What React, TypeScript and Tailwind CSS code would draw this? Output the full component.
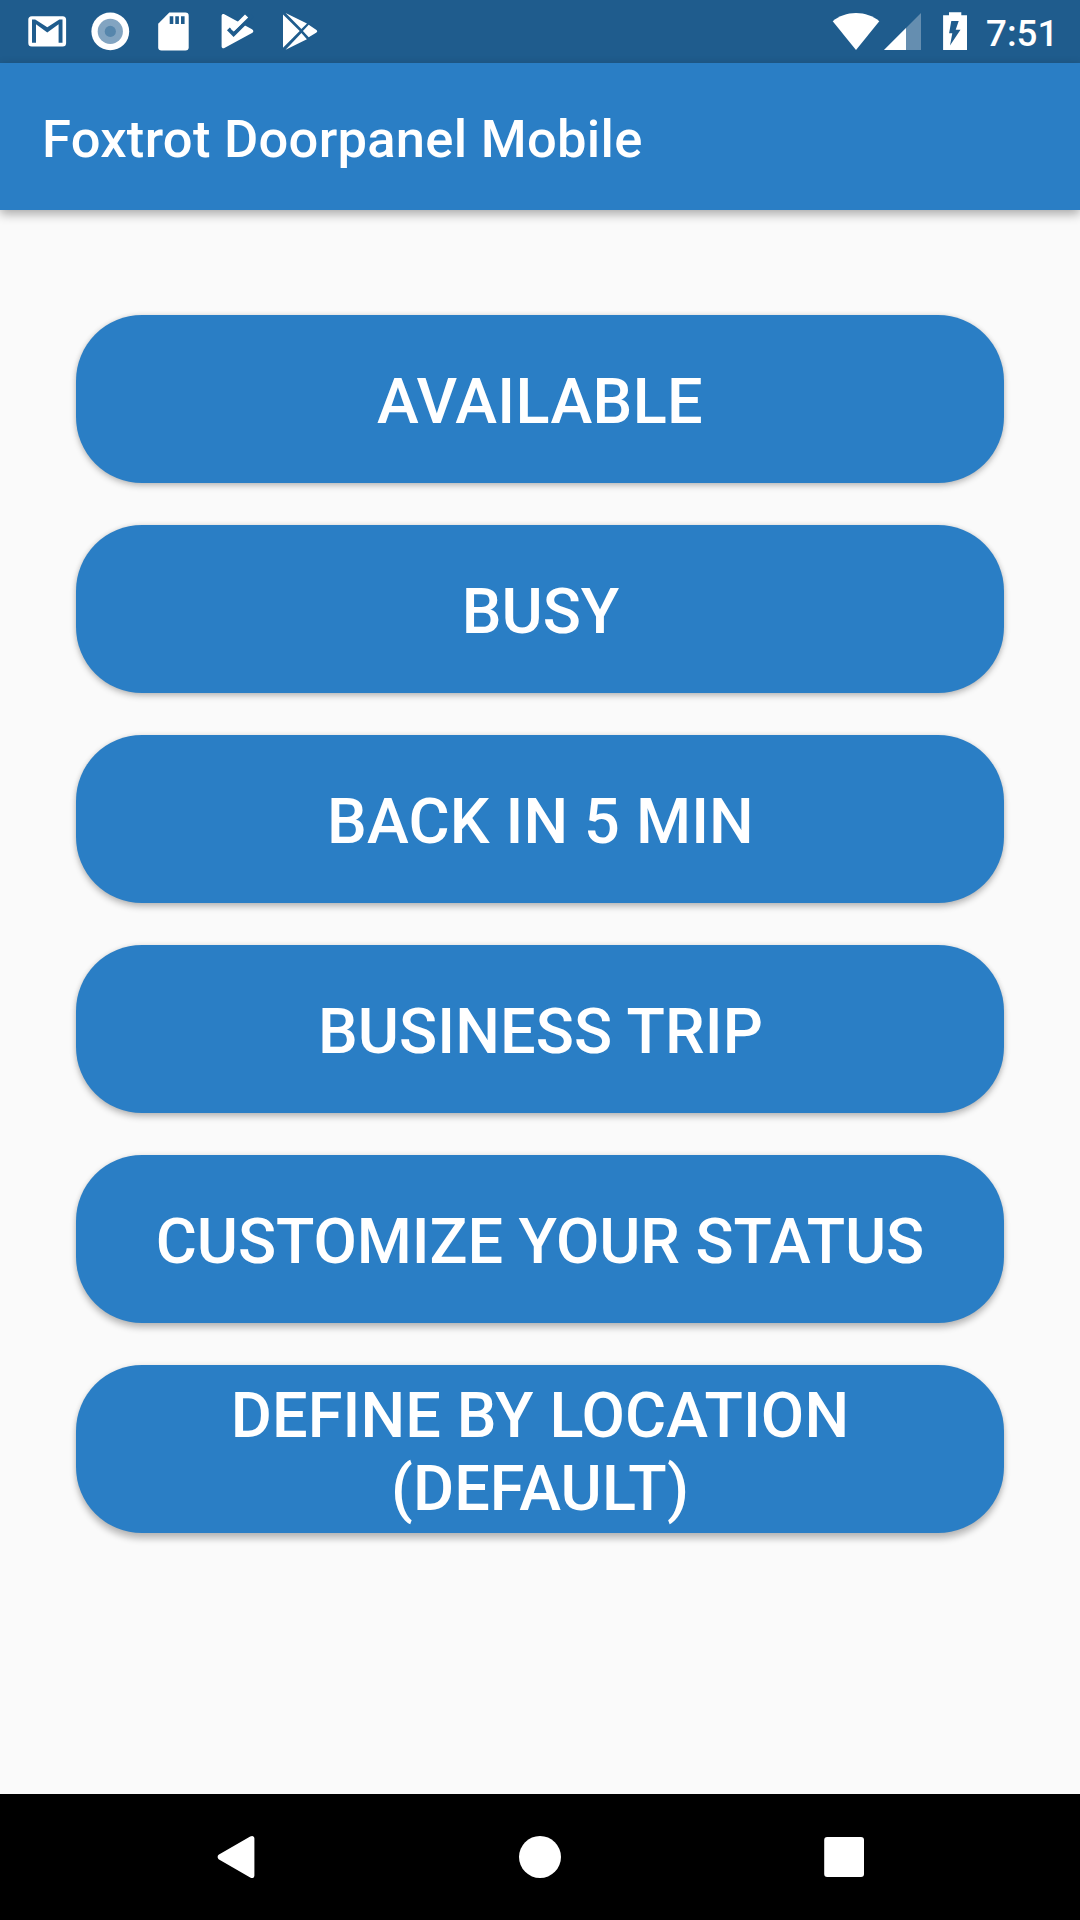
import React from "react";

const statuses = [
  { label: "AVAILABLE", style: "tracking-[0.35px] shadow-[0_3px_6px_rgba(0,0,0,0.22),0_0_5px_rgba(0,0,0,0.1)]" },
  { label: "BUSY", style: "pl-[61px] shadow-[0_3px_6px_rgba(0,0,0,0.23),0_0_5px_rgba(0,0,0,0.1)]" },
  { label: "BACK IN 5 MIN", style: "pl-[61px] tracking-[0.15px] shadow-[0_4px_6px_rgba(0,0,0,0.23),0_0_5px_rgba(0,0,0,0.1)]" },
  { label: "BUSINESS TRIP", style: "pl-[61px] tracking-[0.1px] shadow-[0_4px_6px_rgba(0,0,0,0.23),0_0_5px_rgba(0,0,0,0.1)]" },
  { label: "CUSTOMIZE YOUR STATUS", style: "tracking-[-0.1px] shadow-[0_5px_6px_rgba(0,0,0,0.23),0_0_5px_rgba(0,0,0,0.1)]" },
  { label: "DEFINE BY LOCATION (DEFAULT)", style: "tracking-[0.12px] shadow-[0_6px_6px_rgba(0,0,0,0.23),0_0_5px_rgba(0,0,0,0.1)]" },
];

function GmailIcon() {
  return (
    <svg className="size-[63px]" viewBox="16 0 63 63">
      <rect x="28.3" y="16.2" width="37.8" height="30.4" rx="3.5" fill="#fff" />
      <path d="M32 42.7V19.6h3.2L47.3 27.3l12-7.7h3.2v23.1h-3.9V24.3L47.3 32.4 36 24.3v18.4z" fill="#1f5c8d" />
    </svg>
  );
}

function RecordIcon() {
  return (
    <svg className="size-[63px]" viewBox="79 0 63 63">
      <circle cx="110.3" cy="31.4" r="18.9" fill="#fff" />
      <circle cx="110.3" cy="31.4" r="12.6" fill="#82a4c1" />
      <circle cx="110.3" cy="31.4" r="5.6" fill="#5686ac" />
    </svg>
  );
}

function SdCardIcon() {
  return (
    <svg className="size-[63px]" viewBox="142 0 63 63">
      <path d="M169.3 12.6h16.1a3.3 3.3 0 0 1 3.3 3.3v31.3a3.3 3.3 0 0 1-3.3 3.3h-23.9a3.3 3.3 0 0 1-3.3-3.3V23.7z" fill="#fff" />
      <path d="M169.7 16.2h3.6V24h-3.6zM175.3 16.2h3.6V24h-3.6zM181 16.2h3.6V24H181z" fill="#1f5c8d" />
    </svg>
  );
}

function PlayCheckIcon() {
  return (
    <svg className="size-[63px]" viewBox="205 0 63 63">
      <path d="M221.6 15.8c0-1.4 1.5-2.1 2.7-1.5L252 29.2c1.8 1 1.8 2.8 0 3.8L224.4 47.9c-1.3.7-2.8-.1-2.8-1.5z" fill="#fff" />
      <path d="M228.4 28.9l5.2 5.3L252 15.8" fill="none" stroke="#1f5c8d" strokeWidth="4" />
      <path d="M233.7 25.8L245 14.4l3.2 3.1-14.5 14.1-3-2.9z" fill="#fff" />
    </svg>
  );
}

function PlayIcon() {
  return (
    <svg className="size-[63px]" viewBox="268 0 63 63">
      <path d="M283 14.5v33.2l16.7-16.6zM285.6 13.1l15.8 16L307 23.4zM285.6 49.8l21.3-10.6-5.5-6.3zM308.7 24.7L302.9 31l5.8 6.3 7.4-4.5c1.5-.9 1.5-2.2 0-3.1z" fill="#fff" />
    </svg>
  );
}

function WifiIcon() {
  return (
    <svg className="h-[63px] w-[50px]" viewBox="831 0 50 63">
      <path d="M856 50L832.7 21.2C839 16 847 13 856 13s17 3 23.3 8.2z" fill="#fff" />
    </svg>
  );
}

function SignalIcon() {
  return (
    <svg className="h-[63px] w-[42px]" viewBox="881 0 42 63">
      <path d="M921 13v37H884z" fill="#658eb0" />
      <path d="M906 28v22H884z" fill="#fff" />
    </svg>
  );
}

function BatteryIcon() {
  return (
    <svg className="h-[63px] w-[26px]" viewBox="942 0 26 63">
      <path d="M949 12.2h12.3v3H967V50h-23.9V15.2h5.9z" fill="#fff" />
      <path d="M951.3 21h7.4l-3 8.8h4.8L950 45.5l2.3-12.2h-3.2z" fill="#1f5c8d" />
    </svg>
  );
}

function StatusBar() {
  return (
    <div className="flex h-[63px] items-center bg-[#1f5c8d] pl-4">
      <GmailIcon />
      <RecordIcon />
      <SdCardIcon />
      <PlayCheckIcon />
      <PlayIcon />
      <div className="ml-auto flex items-center pr-[24px]">
        <WifiIcon />
        <SignalIcon />
        <div className="ml-[19px] flex">
          <BatteryIcon />
        </div>
        <span className="ml-[18px] w-[70px] whitespace-nowrap pt-[3px] text-[36.75px] leading-[43px] font-medium">7:51</span>
      </div>
    </div>
  );
}

function NavigationBar() {
  return (
    <nav className="flex h-[126px] items-center justify-center gap-[262px] bg-black">
      <svg className="size-[42px]" viewBox="215 1836 42 42">
        <path d="M250.2 1836.6c2-1.3 4.2-.4 4.2 2v36.8c0 2.4-2.2 3.3-4.2 2L219 1859.4c-1.8-1.2-1.8-3.6 0-4.8z" fill="#fff" />
      </svg>
      <svg className="size-[42px]" viewBox="0 0 42 42">
        <circle cx="21" cy="21" r="21" fill="#fff" />
      </svg>
      <svg className="size-[42px]" viewBox="823 1836 42 42">
        <rect x="824.2" y="1837" width="39.8" height="40" rx="3" fill="#fff" />
      </svg>
    </nav>
  );
}

export default function App() {
  return (
    <div className="flex h-[1920px] w-[1080px] flex-col bg-[#fafafa] font-[Roboto,sans-serif] text-white">
      <StatusBar />
      <header className="flex h-[147px] items-center bg-[#2a7ec5] pl-[42px] shadow-[0_4px_10px_rgba(0,0,0,0.33)]">
        <h1 className="pt-[4px] text-[52.5px] leading-[62px] font-medium tracking-[0.28px]">Foxtrot Doorpanel Mobile</h1>
      </header>
      <main className="flex flex-1 flex-col gap-[42px] px-[76px] pt-[105px]">
        {statuses.map((s) => (
          <button
            key={s.label}
            className={`flex h-[168px] items-center justify-center rounded-[66px] bg-[#2a7ec5] px-[60px] pt-[5px] text-center text-[63px] leading-[73px] font-medium ${s.style}`}
          >
            {s.label}
          </button>
        ))}
      </main>
      <NavigationBar />
    </div>
  );
}
